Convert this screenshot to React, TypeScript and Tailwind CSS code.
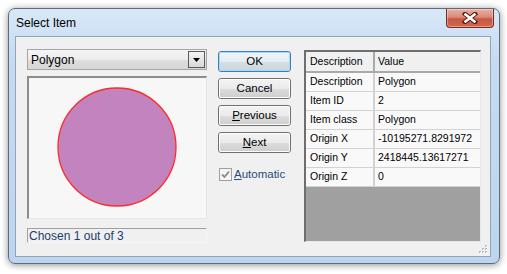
import React from "react";

const F = { fontFamily: '"Liberation Sans", Arial, sans-serif' };

function Btn({ label, u, def }: { label: string; u?: number; def?: boolean }) {
  const text =
    u === undefined ? (
      label
    ) : (
      <>
        {label.slice(0, u)}
        <span className="underline underline-offset-[1px]">{label[u]}</span>
        {label.slice(u + 1)}
      </>
    );
  return (
    <div
      className={`h-[21px] w-[73px] rounded-[3px] border ${
        def ? "border-[#3c7fb1]" : "border-[#707070]"
      }`}
    >
      <div
        className={`flex h-full w-full items-center justify-center rounded-[2px] text-[11.5px] text-black ${
          def
            ? "bg-[linear-gradient(#eef4f8_0%,#e6eef3_50%,#d6e0e6_51%,#cad6dd_100%)] border border-[#a8d8f4]"
            : "bg-[linear-gradient(#f2f2f2_0%,#ebebeb_50%,#dddddd_51%,#cfcfcf_100%)] border border-[#fcfcfc]"
        }`}
      >
        {text}
      </div>
    </div>
  );
}

const rows: [string, string][] = [
  ["Description", "Polygon"],
  ["Item ID", "2"],
  ["Item class", "Polygon"],
  ["Origin X", "-10195271.8291972"],
  ["Origin Y", "2418445.13617271"],
  ["Origin Z", "0"],
];

export default function App() {
  return (
    <div className="h-[274px] w-[507px] bg-white pl-[8px] pt-[8px]" style={F}>
      <div className="flex h-[256px] w-[492px] flex-col rounded-[7px] border border-[#5f6b7a] bg-[linear-gradient(#d8e8f8_0%,#c6dbf1_20%,#bdd5ee_100%)] shadow-[0_1px_7px_rgba(0,0,0,0.45)]">
        {/* title bar */}
        <div className="flex h-[27px] items-center pl-[7px] pr-[5px]">
          <div className="text-[12px] text-black">Select Item</div>
          <div className="ml-auto flex h-[19px] w-[48px] -mt-[8px] items-center justify-center rounded-b-[4px] border border-t-0 border-[#7d2a1e] bg-[linear-gradient(#eab0a2_0%,#d98a78_45%,#c75742_55%,#cf6a50_100%)] shadow-[inset_0_0_0_1px_rgba(255,255,255,0.35)]">
            <svg width="16" height="12" viewBox="0 0 16 12">
              <path d="M3 2 L13 10 M13 2 L3 10" stroke="#5a1a10" strokeWidth="4.5" strokeLinecap="square" />
              <path d="M3.5 2.5 L12.5 9.5 M12.5 2.5 L3.5 9.5" stroke="#ffffff" strokeWidth="2.6" strokeLinecap="square" />
            </svg>
          </div>
        </div>
        {/* client */}
        <div className="relative ml-[6px] flex h-[221px] w-[476px] border border-[#8fa4bd] bg-[#f0f0f0] pl-[11px] pt-[12px]">
          {/* left column */}
          <div className="flex w-[180px] flex-col">
            <div className="flex h-[21px] items-center border border-[#a5a5a5] bg-[linear-gradient(#f5f5f5_0%,#ececec_50%,#dedede_51%,#d6d6d6_100%)] pl-[3px] pr-px">
              <span className="text-[12px] text-black">Polygon</span>
              <div className="ml-auto flex h-[17px] w-[17px] items-center justify-center border border-[#5a5a5a] bg-[linear-gradient(#f4f4f4,#d8d8d8)]">
                <svg width="7" height="4" viewBox="0 0 7 4">
                  <path d="M0 0 H7 L3.5 4 Z" fill="#000" />
                </svg>
              </div>
            </div>
            <div className="mt-[6px] flex h-[143px] items-center justify-center border-l-2 border-t-2 border-[#8c8c8c] border-b border-r border-b-[#e6e6e6] border-r-[#e6e6e6] bg-[#f7f7f7]">
              <svg width="122" height="122" viewBox="0 0 122 122" className="-ml-[2px] -mt-[2px]">
                <circle cx="61" cy="61" r="59" fill="#c383bf" stroke="#ff2a2a" strokeWidth="1.3" />
              </svg>
            </div>
            <div className="mt-[9px] flex h-[15px] items-center border-l border-t border-[#a0a0a0] border-b border-r border-b-[#f5f5f5] border-r-[#f5f5f5] pl-[1px] text-[12px] leading-none text-[#1f3b6e]">
              Chosen 1 out of 3
            </div>
          </div>
          {/* buttons */}
          <div className="ml-[11px] flex flex-col gap-[6px] pt-[2px]">
            <Btn label="OK" def />
            <Btn label="Cancel" />
            <Btn label="Previous" u={0} />
            <Btn label="Next" u={0} />
            <div className="mt-[7px] flex items-center gap-[2px] pl-px">
              <div className="flex h-[13px] w-[13px] items-center justify-center border border-[#a0a0a0] bg-[#f4f4f4]">
                <svg width="9" height="9" viewBox="0 0 9 9">
                  <path d="M1 4.5 L3.5 7 L8 1.5" stroke="#8a8a8a" strokeWidth="1.8" fill="none" />
                </svg>
              </div>
              <span className="text-[11.5px] text-[#2a4a7a]">
                <span className="underline underline-offset-[1px]">A</span>utomatic
              </span>
            </div>
          </div>
          {/* table */}
          <div className="ml-[13px] mt-px flex h-[192px] w-[177px] flex-col border-l-2 border-t-2 border-[#6e6e6e] border-b border-r border-b-[#e8e8e8] border-r-[#e8e8e8] text-[10.5px] text-black">
            <div className="flex h-[21px] border-b-2 border-[#a9a9a9] bg-[#f0f0f0]">
              <div className="flex w-[69px] items-center border-r-2 border-[#a9a9a9] pl-[4px]">Description</div>
              <div className="flex flex-1 items-center pl-[3px]">Value</div>
            </div>
            {rows.map(([k, v]) => (
              <div key={k} className="flex h-[19px] border-b border-[#d2d2d2] bg-[#f9f9f9]">
                <div className="flex w-[69px] items-center border-r-2 border-[#d2d2d2] pl-[4px]">{k}</div>
                <div className="flex flex-1 items-center pl-[3px]">{v}</div>
              </div>
            ))}
            <div className="flex-1 bg-[#a0a0a0]" />
          </div>
          {/* grip */}
          <svg className="absolute bottom-[2px] right-[2px]" width="10" height="10" viewBox="0 0 10 10">
            {[
              [8, 2],
              [5, 5],
              [8, 5],
              [2, 8],
              [5, 8],
              [8, 8],
            ].map(([x, y], i) => (
              <g key={i}>
                <rect x={x - 1} y={y - 1} width="2" height="2" fill="#b8b8b8" />
                <rect x={x} y={y} width="1" height="1" fill="#fff" />
              </g>
            ))}
          </svg>
        </div>
      </div>
    </div>
  );
}
